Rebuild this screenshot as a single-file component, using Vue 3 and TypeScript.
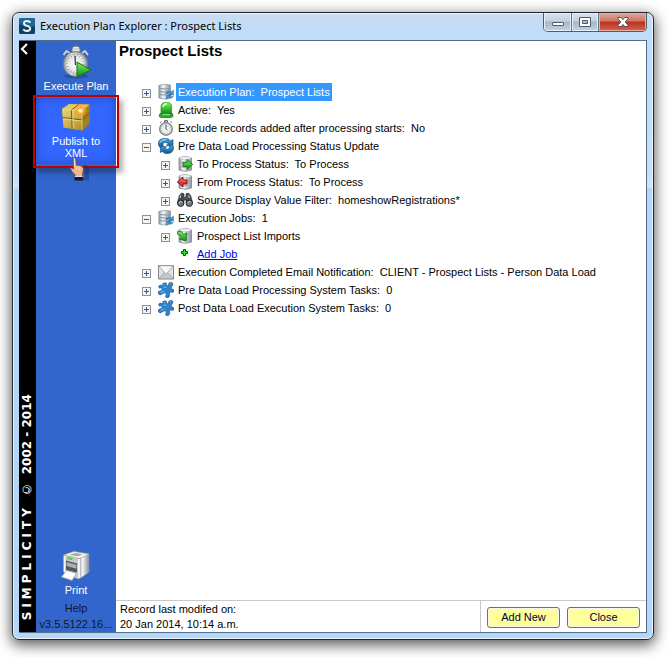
<script setup lang="ts">
interface TreeRow {
  text: string
  icon: string
  child?: boolean
  open?: boolean
  selected?: boolean
  link?: boolean
}

const rows: TreeRow[] = [
  { text: 'Execution Plan:  Prospect Lists', icon: 'plan', selected: true },
  { text: 'Active:  Yes', icon: 'active' },
  { text: 'Exclude records added after processing starts:  No', icon: 'clock' },
  { text: 'Pre Data Load Processing Status Update', icon: 'refresh', open: true },
  { text: 'To Process Status:  To Process', icon: 'to', child: true },
  { text: 'From Process Status:  To Process', icon: 'from', child: true },
  { text: 'Source Display Value Filter:  homeshowRegistrations*', icon: 'find', child: true },
  { text: 'Execution Jobs:  1', icon: 'plan', open: true },
  { text: 'Prospect List Imports', icon: 'import', child: true },
  { text: 'Add Job', icon: 'add', child: true, link: true },
  { text: 'Execution Completed Email Notification:  CLIENT - Prospect Lists - Person Data Load', icon: 'mail' },
  { text: 'Pre Data Load Processing System Tasks:  0', icon: 'puzzle' },
  { text: 'Post Data Load Execution System Tasks:  0', icon: 'puzzle' },
]
</script>

<template>
  <svg class="defs" aria-hidden="true">
    <defs>
      <linearGradient id="metal"><stop offset="0" stop-color="#8d969d" /><stop offset=".35" stop-color="#f4f6f7" /><stop offset="1" stop-color="#87919a" /></linearGradient>
      <linearGradient id="green" x2="0" y2="1"><stop offset="0" stop-color="#8ce878" /><stop offset=".5" stop-color="#3cc433" /><stop offset="1" stop-color="#13861a" /></linearGradient>
      <linearGradient id="gold" x2="1" y2="1"><stop offset="0" stop-color="#ecd778" /><stop offset="1" stop-color="#b18d22" /></linearGradient>
      <linearGradient id="blue" x2="0" y2="1"><stop offset="0" stop-color="#46a8de" /><stop offset="1" stop-color="#0f5190" /></linearGradient>
      <radialGradient id="dial"><stop offset="0" stop-color="#fff" /><stop offset="1" stop-color="#d9dedf" /></radialGradient>
      <radialGradient id="spark"><stop offset="0" stop-color="#fff" /><stop offset=".35" stop-color="#ffc84a" /><stop offset="1" stop-color="#ff8a12" stop-opacity="0" /></radialGradient>
    </defs>
    <symbol id="i-db" viewBox="0 0 16 16">
      <path d="M2 2Q8-.8 14.5 2v12Q8 16.8 2 14z" fill="url(#metal)" stroke="#737d84" stroke-width=".7" />
      <ellipse cx="8.2" cy="2.2" rx="5.8" ry="1.6" fill="#eef1f2" stroke="#a2aab0" stroke-width=".5" />
      <path d="M2.3 6Q8 8.2 14.2 6M2.3 10.5q5.7 2.2 11.9 0" fill="none" stroke="#a0a9af" />
    </symbol>
    <symbol id="i-plan" viewBox="0 0 16 16">
      <path d="M.8 1.5Q6-.8 12.5 1v13Q6 16 .8 14z" fill="url(#metal)" stroke="#7b8993" stroke-width=".6" />
      <path d="M2 4.5q5 1 10 .2M2 7.5q5 1 10 .2M2 10.5q4 1 6 .2" fill="none" stroke="#7f929f" />
      <path d="M8 8.5q3-2.5 5.5-.7L15.5 6v5h-5l1.7-1.6Q10 8.7 8 10zM15.7 12q-1.8 3.2-5.5 1.8l-1.7 1.9v-4.6h4.8l-1.5 1.4q2 .7 3.9-.5z" fill="#3f93d4" stroke="#216396" stroke-width=".4" />
    </symbol>
    <symbol id="i-active" viewBox="0 0 16 16">
      <path d="M3 12V4.5Q3 .3 8.3.3t5.2 4.2V12z" fill="url(#green)" stroke="#258b27" stroke-width=".7" />
      <path d="M2 11.5l2 .8h8.500l2-.8.5 2.800-2 1.400H3l-2-1.400z" fill="#35a72f" stroke="#176e1c" stroke-width=".7" />
      <path d="M5 5Q5.5 1.9 9 1.8" stroke="#d4ffc7" stroke-width="1.4" fill="none" />
      <path d="M4.5 12.5h7.5" stroke="#85e572" stroke-width="1.2" />
    </symbol>
    <symbol id="i-clock" viewBox="0 0 16 16">
      <path d="M6.5.6h3v2h-3zM2 2.8l1.5-1.2M14 2.8l-1.5-1.2" fill="#b6bbbe" stroke="#656b6f" />
      <circle cx="8" cy="8.9" r="6.3" fill="url(#dial)" stroke="#84898d" stroke-width="1.4" />
      <circle cx="8" cy="8.9" r="4.6" fill="none" stroke="#888" stroke-width=".9" stroke-dasharray=".5 1.9" />
      <path d="M8 4.8v4.3l1.3 1.3" fill="none" stroke="#303336" stroke-width=".9" />
    </symbol>
    <symbol id="i-refresh" viewBox="0 0 16 16">
      <path d="M0 6.5Q.2.8 6.5.3q4.4 0 6 2.5l2.5-1.2v6l-6.700-.2 1.900-2Q7 3.500 5 5.200L5.200 9 2.500 10.200Z" fill="url(#blue)" stroke="#104d7e" stroke-width=".6" />
      <path d="M2.500 8.500l6.200.2-1.700 1.800q2.500 1.800 4.400-.3L11 7.200l4.700 1.300Q16 14.400 10.500 15.600q-4.500.3-6.200-2.200l-2 1.200z" fill="url(#blue)" stroke="#104d7e" stroke-width=".6" />
      <path d="M1.6 4.6Q4 1.5 8 1.6" stroke="#b7e5fa" fill="none" />
    </symbol>
    <symbol id="i-to" viewBox="0 0 16 16"><use href="#i-db" /><path d="M6 6.3h4V3.4l5.7 5-5.7 5v-3H6z" fill="url(#green)" stroke="#146e18" stroke-width=".9" /></symbol>
    <symbol id="i-from" viewBox="0 0 16 16"><use href="#i-db" /><path d="M10 5.9H6V3L.3 8 6 13v-3h4z" fill="#df3339" stroke="#7c1218" stroke-width=".9" /><path d="M2.5 7.5L5 5.3v1.8h3.8" fill="none" stroke="#ff9698" stroke-width=".7" /></symbol>
    <symbol id="i-import" viewBox="0 0 16 16"><use href="#i-db" /><path d="M.6 3.3Q5 2.6 6.8 6.6L9.6 4.8l-.4 8.4L2.4 11l2.2-1.6Q3.2 6.4.6 6.2z" fill="url(#green)" stroke="#146e18" stroke-width=".8" /></symbol>
    <symbol id="i-find" viewBox="0 0 16 16">
      <path d="M2.4 3.5L4.5 1 7 1.8v3.4h2V1.8L11.5 1l2.1 2.5L15.8 11H9.3l-.4-3H7.1l-.4 3H.2z" fill="#4b4e50" stroke="#222" stroke-width=".6" />
      <circle cx="3.7" cy="11.2" r="3.2" fill="#777c80" stroke="#222" /><circle cx="12.3" cy="11.2" r="3.2" fill="#777c80" stroke="#222" />
      <path d="M2.1 11q1-2 2.5-1.4M10.9 11q1-2 2.5-1.4M3.8 3.4L2.9 6M11.5 3.4l.9 2.6" fill="none" stroke="#d5d9dc" />
    </symbol>
    <symbol id="i-add" viewBox="0 0 16 16"><path d="M6.5 3.5h2v2h2v2h-2v2h-2v-2h-2v-2h2z" fill="#21f321" stroke="#064b0a" /></symbol>
    <symbol id="i-mail" viewBox="0 0 16 16"><path d="M.5 1.5h15v13.5H.5z" fill="#dfe1e2" stroke="#85898b" /><path d="M.8 14.7L6 8.5h4l5.2 6.2z" fill="#c5c9cb" stroke="#929698" stroke-width=".6" /><path d="M.8 1.8L8 10.3l7.2-8.5z" fill="#f7f8f8" stroke="#979b9d" stroke-width=".7" /></symbol>
    <symbol id="i-puzzle" viewBox="0 0 16 16"><path d="M4.6 1.6Q7.2-.2 8.4 1.4q.6 1.2-.1 2.2l2.3.2Q9.8.5 12.7.2q2.9.3 2 3L13.3 5l.7 2.4q2.4-.5 2 1.9-1.1 2-3.1.8l-1.4.4.2 3.4q-1.3 2.7-3.5 1.5-1.3-1 .1-3l-1-1.8-3 1.1Q2 14 .3 11.8q-.7-2.8 2-3L4.2 8l-.6-2.3-2.2.5Q-.4 3.9 2 3L5 3.8z" fill="#2d83cb" stroke="#155688" stroke-width=".6" /><path d="M5.5 2.2l1.4.1M5.4 5l3 .3M11.8 1.9l1.3-.2M2.6 10.3l3.4-1.1" fill="none" stroke="#8dcef4" stroke-width=".8" /></symbol>
  </svg>

  <main class="window">
    <header class="titlebar">
      <svg class="logo" viewBox="0 0 16 16" aria-hidden="true">
        <rect width="16" height="16" rx="1.5" fill="#123f61" /><path d="M0 1.5Q0 0 1.5 0h13Q16 0 16 1.5V8Q8 11 0 6z" fill="#22668f" />
        <path d="M11.4 4.6Q10.2 3 8 3 5 3 5 5.3q0 1.9 3 2.6 3.2.8 3.2 2.7Q11.2 13 8 13q-2.5 0-3.7-1.8" fill="none" stroke="#e5f5ff" stroke-width="1.9" />
      </svg>
      <h1>Execution Plan Explorer : Prospect Lists</h1>
      <div class="controls">
        <button type="button" class="min" aria-label="Minimize"><svg viewBox="0 0 14 12"><rect x="1.5" y="6.5" width="11" height="3" rx=".5" fill="#fff" stroke="#4f5a6b" /></svg></button>
        <button type="button" class="max" aria-label="Maximize"><svg viewBox="0 0 14 12"><path d="M1.5 1.5h11v9h-11zM4.5 4.5v3h5v-3z" fill="#fff" fill-rule="evenodd" stroke="#4f5a6b" /></svg></button>
        <button type="button" class="shut" aria-label="Close window"><svg viewBox="0 0 14 12"><path d="M2 1.5h3.3L7 3.5l1.7-2H12v1.3L9.3 6l2.7 3.2v1.3H8.7L7 8.5l-1.7 2H2V9.2L4.7 6 2 2.8z" fill="#fff" stroke="#55505b" /></svg></button>
      </div>
    </header>

    <div class="body">
      <aside class="strip">
        <button type="button" class="collapse" aria-label="Collapse"><svg viewBox="0 0 10 12"><path d="M8 1L3 6l5 5" fill="none" stroke="#fff" stroke-width="2.2" /></svg></button>
        <p class="brand"><span class="wide">SIMPLICITY</span><span class="mark">©</span><span>2002 - 2014</span></p>
      </aside>

      <nav class="side">
        <button type="button" class="action">
          <svg viewBox="0 0 32 34">
            <ellipse cx="16" cy="31" rx="12" ry="2.5" fill="#1e3f84" opacity=".5" />
            <path d="M12 4q0-3 4-3t4 3v3h-8z" fill="#e4e6e4" stroke="#6f7575" /><path d="M13 4h6M3.5 10l3-4 3 2M28 10l-3-4-3 2" fill="none" stroke="#cdd1d1" stroke-width="2" />
            <circle cx="15.5" cy="19" r="12.3" fill="url(#metal)" stroke="#70777b" /><circle cx="15.5" cy="19" r="10.3" fill="url(#dial)" stroke="#a4abad" />
            <circle cx="15.5" cy="19" r="8.4" fill="none" stroke="#777" stroke-width="1.6" stroke-dasharray=".6 2.3" /><path d="M15 11l.4 9" stroke="#333" stroke-width="1.2" />
            <path d="M17 17v15l14-7z" fill="url(#green)" stroke="#16701c" />
          </svg>
          <span>Execute Plan</span>
        </button>
        <button type="button" class="action current">
          <svg viewBox="0 0 32 32">
            <path d="M2 8L9 3l20.5.5v19L23 29.5 3.5 26.5z" fill="#93752a" />
            <path d="M2 8l20 2v19.5L3.5 26.5z" fill="url(#gold)" /><path d="M22 10l7.5-6.5v19L22 29.5z" fill="#a08024" /><path d="M2 8l7-5 20.5.5L22 10z" fill="#dfca6c" />
            <path d="M2.5 16.5L22 19l7.5-7M11.5 9l.7 18.7M11.5 9L19 3.2" fill="none" stroke="#6f5518" /><path d="M2.5 8L22 10v18.5M3 17.7l19 2.5M12.8 9.5l.5 18" fill="none" stroke="#f4e69a" stroke-width=".7" />
            <circle cx="20.5" cy="9" r="7" fill="url(#spark)" /><path d="M20.5 3l1.2 4.6 3-2-1.8 3.3 3.6.8-3.6.7 1.8 3.5-3-2-1.2 3-1-3-3 2 1.8-3.5-3.8-.7 3.8-.8-1.8-3.3 3 2z" fill="#ffa42d" /><circle cx="20.5" cy="9.6" r="2.2" fill="#fff1b5" />
          </svg>
          <span>Publish to XML</span>
          <svg class="hand" viewBox="0 0 22 28" aria-hidden="true">
            <path d="M8 25l12-1V11l-5-3 1 13z" fill="#102449" opacity=".35" />
            <path d="M4.2 1.8Q5.8.3 6.8 3l.6 6.5q1.6-1.3 2.6.2 1.5-.8 2.5.7 2 .1 2 2.8l-1 5v2.5H6V18.5q-3-2-4.5-5.5Q1 10.8 3.6 12.3l1 .8z" fill="#efb58f" stroke="#704023" stroke-width=".7" />
            <path d="M7.5 10v4M10.2 10.6V14M5.4 3v8" fill="none" stroke="#ffe1c7" stroke-width=".8" /><path d="M5.5 20.5h8.3v4H5.5z" fill="#17191c" /><path d="M5.8 20.5h7.7" stroke="#d9dce2" />
          </svg>
        </button>
        <div class="side-end">
          <button type="button" class="action print">
            <svg viewBox="0 0 32 32">
              <path d="M4 5L14 1.5 29 4v18l-10 7-15-5z" fill="#d7d9d8" stroke="#7b7f80" /><path d="M4 5l15 3.500V29L4 24z" fill="#c6cacb" /><path d="M19 8.500L29 4v18l-10 7z" fill="url(#metal)" />
              <path d="M3.5 5L14 1.5 29 4 19 8.500z" fill="#f7f7f5" stroke="#979a9a" stroke-width=".6" /><path d="M9 5l6-2 8 1.300-5 2z" fill="#a5abad" />
              <path d="M6 10.500l11 3v9L6 20z" fill="#505759" /><path d="M6.500 12l10 2.800v4L6.500 16z" fill="#aab0b1" /><path d="M7.500 8l5 1.200" stroke="#43d629" stroke-width="2" />
              <path d="M6.500 20.500l10 2.700L12 30.500 1.500 27z" fill="#fff" stroke="#969b9d" stroke-width=".7" /><path d="M4.500 6v16M19 9v19" stroke="#f8f8f8" stroke-width="1.8" />
            </svg>
            <span>Print</span>
          </button>
          <a href="#help" class="help">Help</a>
          <p class="version">v3.5.5122.16...</p>
        </div>
      </nav>

      <section class="content">
        <h2>Prospect Lists</h2>
        <ul class="tree">
          <li v-for="row in rows" :key="row.text" :class="{ child: row.child }">
            <span v-if="row.link" class="spacer"></span>
            <button v-else type="button" class="toggle" :class="{ open: row.open }" :aria-expanded="!!row.open" :aria-label="row.text"></button>
            <svg class="icon" aria-hidden="true"><use :href="'#i-' + row.icon" /></svg>
            <a v-if="row.link" href="#add-job" class="label">{{ row.text }}</a>
            <span v-else class="label" :class="{ selected: row.selected }">{{ row.text }}</span>
          </li>
        </ul>
        <footer>
          <p>Record last modifed on:<br />20 Jan 2014, 10:14 a.m.</p>
          <div class="buttons">
            <button type="button">Add New</button>
            <button type="button">Close</button>
          </div>
        </footer>
      </section>
    </div>
  </main>
</template>

<style>
body { background: #fff; }
#app { display: flex; min-height: 100vh; box-sizing: border-box; padding: 12px 15px 18px 12px; }
</style>

<style scoped>
* { box-sizing: border-box; }
button { padding: 0; border: 0; background: none; font: inherit; color: inherit; }
h1, h2, p, ul { margin: 0; padding: 0; }
.defs { position: absolute; width: 0; height: 0; }
.window {
  flex: 1; min-width: 0; display: flex; flex-direction: column; padding: 0 6px 6px;
  border: 1px solid #20262e; border-radius: 7px;
  background: linear-gradient(#c9dcf1, #bddcfa 28px, #c4dff9 160px, #d3e6f8 174px, #b5d7f7 175px, #b5d7f7);
  box-shadow: inset 0 0 0 1px #eaf5ff, 0 4px 14px 1px rgba(0, 0, 0, .65);
  font: 11px/18px "Liberation Sans", Arial, sans-serif; color: #000;
}
.titlebar { height: 27px; display: flex; align-items: flex-start; }
.logo { width: 16px; height: 16px; margin-top: 5px; }
h1 { flex: 1; margin: 4px 0 0 5px; font: 11px/18px "Noto Sans", "Segoe UI", sans-serif; white-space: nowrap; }
.controls { display: flex; height: 19px; border: 1px solid #515c6b; border-top: 0; border-radius: 0 0 5px 5px; overflow: hidden; }
.controls button { display: grid; place-items: center; width: 28px; background: linear-gradient(#d9e3ec, #c3d0de 45%, #a4b7cb 50%, #c1d3e4); border-right: 1px solid #657184; box-shadow: inset 0 0 0 1px #e7f0f8; }
.controls .max { width: 27px; }
.controls .shut { width: 47px; border: 0; background: linear-gradient(#dda79d, #cd7464 45%, #b83221 50%, #d5654b); box-shadow: inset 0 0 0 1px #e9afa4; }
.controls svg { width: 14px; height: 12px; }
.body { flex: 1; display: flex; min-height: 0; border: 1px solid #536b87; border-width: 1px 1px 1px 0; background: #fff; }
.strip { width: 17px; flex: none; background: #000; color: #fff; display: flex; flex-direction: column; justify-content: space-between; align-items: center; padding: 2px 0 12px; }
.collapse { display: flex; padding-right: 7px; }
.collapse svg { width: 10px; height: 12px; }
.brand { display: flex; gap: 8px; writing-mode: vertical-rl; transform: rotate(180deg); font: bold 12px/17px "DejaVu Sans", Verdana, sans-serif; white-space: pre; }
.wide { letter-spacing: 4px; }
.mark { font-weight: normal; }
.side { width: 80px; flex: none; background: #3366cc; display: flex; flex-direction: column; color: #fff; line-height: 12px; }
.action { position: relative; display: flex; flex-direction: column; align-items: center; gap: 1px; padding: 4px 8px 6px; text-align: center; }
.action > svg:first-child { width: 32px; height: 34px; }
.action span { white-space: nowrap; }
.current { background: #3366ff; box-shadow: inset 0 0 10px #274bb5; height: 66px; padding: 2px 14px; }
.current > svg:first-child { height: 34px; }
.current span { white-space: normal; }
.current::after { content: ""; position: absolute; inset: -3px -3px -4px; border: 2px solid #c00000; box-shadow: 4px 5px 5px rgba(0, 0, 0, .3); pointer-events: none; }
.hand { position: absolute; left: 33px; top: 58px; width: 22px; height: 28px; z-index: 1; }
.side-end { margin-top: auto; display: flex; flex-direction: column; }
.print { padding-bottom: 3px; }
.help { text-align: center; color: #10182c; text-decoration: none; line-height: 18px; }
.version { text-align: center; line-height: 15px; color: #10182c; white-space: nowrap; }
.content { flex: 1; min-width: 0; display: flex; flex-direction: column; }
h2 { padding-left: 3px; font-size: 15px; line-height: 20px; }
.tree { flex: 1; list-style: none; padding: 22px 0 0 26px; }
.tree li { display: flex; align-items: center; height: 18px; }
.tree .child { padding-left: 19px; }
.toggle { width: 9px; height: 9px; flex: none; margin-top: 2px; border: 1px solid #919191; background: linear-gradient(#3854a0, #3854a0) center / 5px 1px no-repeat, linear-gradient(#3854a0, #3854a0) center / 1px 5px no-repeat, #f5f5f3; }
.toggle.open { background: linear-gradient(#3854a0, #3854a0) center / 5px 1px no-repeat, #f5f5f3; }
.spacer { width: 9px; }
.icon { width: 16px; height: 16px; flex: none; margin: 0 2px 0 7px; }
.label { padding: 0 2px; white-space: pre; }
.label.selected { background: #3399ff; color: #fff; }
a.label { color: #0000ee; }
footer { display: flex; height: 32px; border-top: 1px solid #c9c9c9; }
footer p { flex: 1; padding: 1px 4px; line-height: 15px; }
.buttons { display: flex; align-items: center; gap: 7px; padding: 1px 6px 0; border-left: 1px solid #c9c9c9; }
.buttons button { width: 73px; height: 21px; border: 1px solid #707070; border-radius: 3px; background: #ffff99; box-shadow: inset 0 0 0 1px #f6f6ec; color: #000040; }
</style>
